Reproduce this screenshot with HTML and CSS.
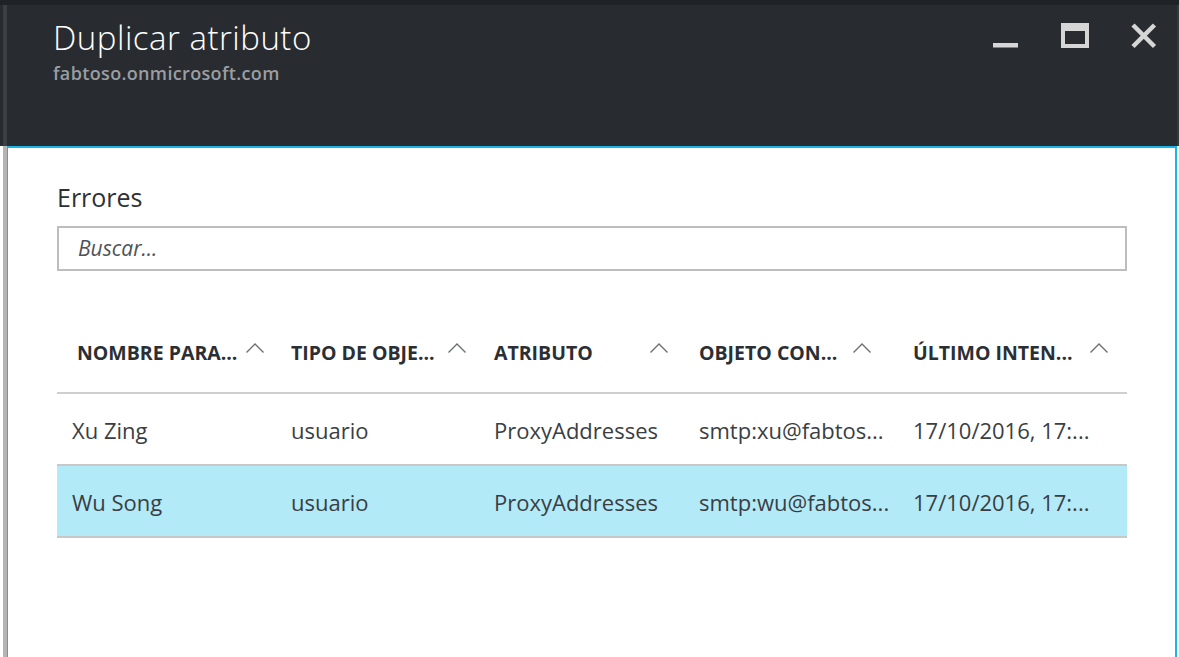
FILE: index.html
```html
<!DOCTYPE html>
<html lang="es">
<head>
<meta charset="utf-8">
<title>Duplicar atributo</title>
<link rel="stylesheet" href="styles.css">
</head>
<body>
<div class="page">
  <div class="topstrip"></div>
  <header class="blade-header">
    <div class="edge"></div>
    <div class="header-main">
      <div class="titles">
        <h1 class="title">Duplicar atributo</h1>
        <div class="subtitle">fabtoso.onmicrosoft.com</div>
      </div>
      <div class="controls">
        <svg class="ctl" width="26" height="26" viewBox="0 0 26 26" aria-label="Minimizar"><rect x="0" y="20" width="25" height="4.5" fill="#d6d6d6"/></svg>
        <svg class="ctl" width="28" height="26" viewBox="0 0 28 26" aria-label="Maximizar"><path fill="#d6d6d6" fill-rule="evenodd" d="M0 0H28V25H0Z M4 8V21H24V8Z"/></svg>
        <svg class="ctl" width="26" height="26" viewBox="0 0 26 26" aria-label="Cerrar"><path d="M2 2L23.5 23.5M23.5 2L2 23.5" stroke="#d6d6d6" stroke-width="4.5" fill="none"/></svg>
      </div>
    </div>
    <div class="edge-right"></div>
  </header>
  <main class="blade-content">
    <div class="edge"></div>
    <section class="panel">
      <h2 class="section-title">Errores</h2>
      <div class="search"><span class="placeholder">Buscar...</span></div>
      <div class="grid">
        <div class="hcell c1"><span>NOMBRE PARA...</span><svg class="sort" width="18" height="10" viewBox="0 0 18 10"><path d="M0.5 9.5L9 1L17.5 9.5" stroke="#6b6f73" stroke-width="1.4" fill="none"/></svg></div>
        <div class="hcell c2"><span>TIPO DE OBJE...</span><svg class="sort" width="18" height="10" viewBox="0 0 18 10"><path d="M0.5 9.5L9 1L17.5 9.5" stroke="#6b6f73" stroke-width="1.4" fill="none"/></svg></div>
        <div class="hcell c3"><span>ATRIBUTO</span><svg class="sort" width="18" height="10" viewBox="0 0 18 10"><path d="M0.5 9.5L9 1L17.5 9.5" stroke="#6b6f73" stroke-width="1.4" fill="none"/></svg></div>
        <div class="hcell c4"><span>OBJETO CON...</span><svg class="sort" width="18" height="10" viewBox="0 0 18 10"><path d="M0.5 9.5L9 1L17.5 9.5" stroke="#6b6f73" stroke-width="1.4" fill="none"/></svg></div>
        <div class="hcell c5"><span>ÚLTIMO INTEN...</span><svg class="sort" width="18" height="10" viewBox="0 0 18 10"><path d="M0.5 9.5L9 1L17.5 9.5" stroke="#6b6f73" stroke-width="1.4" fill="none"/></svg></div>

        <div class="cell c1">Xu Zing</div>
        <div class="cell">usuario</div>
        <div class="cell">ProxyAddresses</div>
        <div class="cell">smtp:xu@fabtos...</div>
        <div class="cell">17/10/2016, 17:...</div>

        <div class="cell c1 sel">Wu Song</div>
        <div class="cell sel">usuario</div>
        <div class="cell sel">ProxyAddresses</div>
        <div class="cell sel">smtp:wu@fabtos...</div>
        <div class="cell sel">17/10/2016, 17:...</div>
      </div>
    </section>
  </main>
</div>
</body>
</html>
```

FILE: styles.css
```css
html, body {
  margin: 0;
  padding: 0;
  background: #ffffff;
}

body {
  font-family: "Open Sans", "Noto Sans", "Liberation Sans", sans-serif;
}

.page {
  width: 1179px;
  height: 657px;
  display: flex;
  flex-direction: column;
  overflow: hidden;
}

.topstrip {
  height: 5px;
  background: #1f2327;
  flex: none;
}

.blade-header {
  height: 141px;
  flex: none;
  display: flex;
  background: #282c30;
  padding-left: 3px;
}

.blade-header .edge {
  width: 4px;
  background: #3a3f43;
}

.header-main {
  flex: 1;
  display: flex;
  justify-content: space-between;
  align-items: flex-start;
  padding: 12.5px 20px 0 46px;
}

.edge-right {
  width: 2px;
  background: #34393d;
}

.title {
  margin: 0;
  font-size: 33px;
  letter-spacing: 0.5px;
  line-height: 40px;
  font-weight: 300;
  color: #ffffff;
}

.subtitle {
  margin-top: 3.5px;
  font-size: 18px;
  letter-spacing: 0.35px;
  line-height: 24px;
  font-weight: 600;
  color: #9a9ea2;
}

.controls {
  display: flex;
  gap: 42px;
  margin-top: 5.5px;
}

.ctl {
  display: block;
}

.blade-content {
  flex: 1;
  display: flex;
  padding-left: 3px;
  padding-right: 2px;
  background: #ffffff;
}

.blade-content .edge {
  width: 4px;
  background: #b4b4b4;
}

.panel {
  flex: 1;
  border-top: 2px solid #19b5ea;
  border-left: 1px solid #19b5ea;
  border-right: 2px solid #19b5ea;
  padding: 34px 48px 0 49px;
}

.section-title {
  margin: 0;
  font-size: 25px;
  line-height: 30px;
  font-weight: 400;
  color: #2d3136;
}

.search {
  margin-top: 14px;
  height: 41px;
  border: 2px solid #bdbdbd;
  padding-left: 19px;
  display: flex;
  align-items: center;
}

.placeholder {
  font-size: 21px;
  line-height: 41px;
  font-style: italic;
  color: #4f5357;
}

.grid {
  display: grid;
  grid-template-columns: 219px 203px 205px 214px 229px;
}

.hcell {
  display: flex;
  justify-content: space-between;
  align-items: flex-start;
  padding: 70px 0 27px 15px;
  border-bottom: 2px solid #cfcfcf;
  font-size: 19.5px;
  line-height: 24px;
  font-weight: 700;
  color: #2b2f34;
  white-space: nowrap;
}

.hcell.c1 { padding-left: 20px; padding-right: 12px; }
.hcell.c2 { padding-right: 13px; }
.hcell.c3 { padding-right: 16px; }
.hcell.c4 { padding-right: 27px; }
.hcell.c5 { padding-right: 19px; }

.sort {
  display: block;
  flex: none;
  margin-top: 2px;
}

.cell {
  height: 68px;
  padding-top: 2px;
  display: flex;
  align-items: center;
  padding-left: 15px;
  border-bottom: 2px solid #c8c8c8;
  font-size: 22px;
  color: #3a3e43;
  white-space: nowrap;
}

.cell.sel {
  background: #b3eaf8;
}
```
